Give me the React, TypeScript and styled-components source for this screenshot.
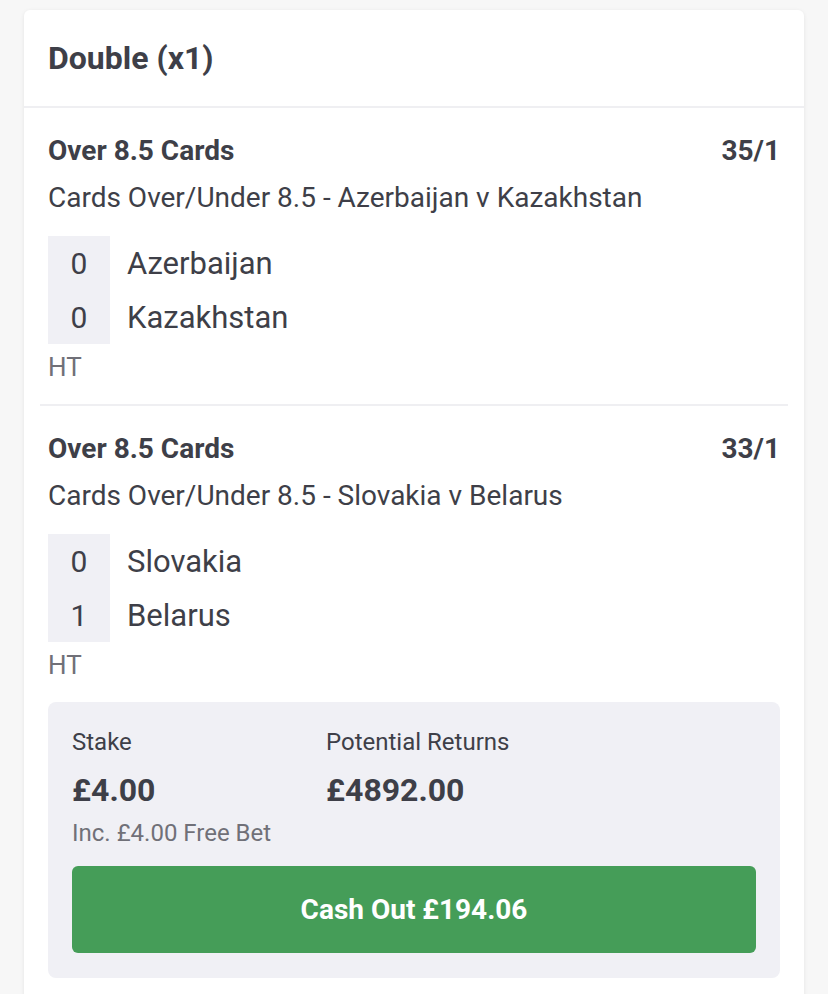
import React from 'react'
import styled, { createGlobalStyle } from 'styled-components'

const GlobalStyle = createGlobalStyle`
  body {
    margin: 0;
    background: #f7f7f7;
    font-family: Roboto, "Liberation Sans", sans-serif;
    color: #3e3f48;
  }
`

type Team = { name: string; score: number }
type Selection = {
  title: string
  odds: string
  market: string
  teams: Team[]
}

const selections: Selection[] = [
  {
    title: 'Over 8.5 Cards',
    odds: '35/1',
    market: 'Cards Over/Under 8.5 - Azerbaijan v Kazakhstan',
    teams: [
      { name: 'Azerbaijan', score: 0 },
      { name: 'Kazakhstan', score: 0 },
    ],
  },
  {
    title: 'Over 8.5 Cards',
    odds: '33/1',
    market: 'Cards Over/Under 8.5 - Slovakia v Belarus',
    teams: [
      { name: 'Slovakia', score: 0 },
      { name: 'Belarus', score: 1 },
    ],
  },
]

const Page = styled.div`
  padding: 10px 24px 0;
  height: 994px;
  box-sizing: border-box;
  overflow: hidden;
`
const Card = styled.div`
  background: #fff;
  border-radius: 6px;
  box-shadow: 0 1px 4px rgba(0, 0, 0, 0.08);
  min-height: 1000px;
`
const Header = styled.div`
  height: 96px;
  display: flex;
  align-items: center;
  padding: 0 24px;
  border-bottom: 2px solid #efeff2;
`
const HeaderTitle = styled.h2`
  margin: 0;
  font-size: 32px;
  font-weight: 700;
`
const Leg = styled.div<{ last?: boolean }>`
  margin: 0 16px;
  padding: 26px 8px 22px;
  border-bottom: ${({ last }) => (last ? 'none' : '2px solid #efeff2')};
`
const LegTop = styled.div`
  display: flex;
  justify-content: space-between;
  align-items: center;
  font-size: 28px;
  font-weight: 700;
  line-height: 34px;
`
const Market = styled.div`
  margin-top: 13px;
  font-size: 28px;
  line-height: 34px;
`
const Scoreboard = styled.div`
  margin-top: 21px;
  display: grid;
  grid-template-columns: 62px 1fr;
`
const Score = styled.div`
  background: #f0f0f5;
  height: 54px;
  display: flex;
  align-items: center;
  justify-content: center;
  font-size: 30px;
`
const TeamName = styled.div`
  height: 54px;
  display: flex;
  align-items: center;
  padding-left: 17px;
  font-size: 31px;
`
const Period = styled.div`
  margin-top: 8px;
  font-size: 26px;
  line-height: 30px;
  color: #707078;
`
const Summary = styled.div`
  margin: 0 24px;
  background: #f0f0f5;
  border-radius: 8px;
  padding: 25px 24px 25px;
`
const SummaryRow = styled.div`
  display: grid;
  grid-template-columns: 254px 1fr;
`
const Label = styled.div`
  font-size: 24px;
  line-height: 30px;
`
const Amount = styled.div`
  margin-top: 14px;
  font-size: 32px;
  font-weight: 700;
  line-height: 38px;
`
const Note = styled.div`
  margin-top: 9px;
  font-size: 24px;
  line-height: 30px;
  color: #707078;
`
const CashOutButton = styled.button`
  margin-top: 18px;
  width: 100%;
  height: 87px;
  border: none;
  border-radius: 6px;
  background: #459d58;
  color: #fff;
  font-family: inherit;
  font-size: 28px;
  font-weight: 700;
  cursor: pointer;
`

const App = () => (
  <Page>
    <GlobalStyle />
    <Card>
      <Header>
        <HeaderTitle>Double (x1)</HeaderTitle>
      </Header>
      {selections.map((sel, i) => (
        <Leg key={i} last={i === selections.length - 1}>
          <LegTop>
            <span>{sel.title}</span>
            <span>{sel.odds}</span>
          </LegTop>
          <Market>{sel.market}</Market>
          <Scoreboard>
            {sel.teams.map((team) => (
              <React.Fragment key={team.name}>
                <Score>{team.score}</Score>
                <TeamName>{team.name}</TeamName>
              </React.Fragment>
            ))}
          </Scoreboard>
          <Period>HT</Period>
        </Leg>
      ))}
      <Summary>
        <SummaryRow>
          <div>
            <Label>Stake</Label>
            <Amount>£4.00</Amount>
          </div>
          <div>
            <Label>Potential Returns</Label>
            <Amount>£4892.00</Amount>
          </div>
        </SummaryRow>
        <Note>Inc. £4.00 Free Bet</Note>
        <CashOutButton>Cash Out £194.06</CashOutButton>
      </Summary>
    </Card>
  </Page>
)

export default App
